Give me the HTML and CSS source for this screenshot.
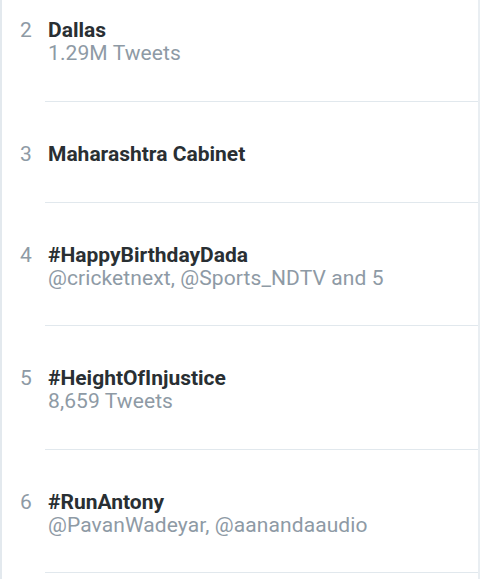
FILE: index.html
```html
<!DOCTYPE html>
<html lang="en">
<head>
<meta charset="utf-8">
<title>Trends</title>
<link rel="stylesheet" href="styles.css">
</head>
<body>
<div class="panel">
  <ol class="trends">
    <li class="trend">
      <span class="rank">2</span>
      <div class="body">
        <div class="name">Dallas</div>
        <div class="meta">1.29M Tweets</div>
      </div>
    </li>
    <li class="trend">
      <span class="rank">3</span>
      <div class="body">
        <div class="name">Maharashtra Cabinet</div>
      </div>
    </li>
    <li class="trend">
      <span class="rank">4</span>
      <div class="body">
        <div class="name">#HappyBirthdayDada</div>
        <div class="meta">@cricketnext, @Sports_NDTV and 5</div>
      </div>
    </li>
    <li class="trend">
      <span class="rank">5</span>
      <div class="body">
        <div class="name">#HeightOfInjustice</div>
        <div class="meta">8,659 Tweets</div>
      </div>
    </li>
    <li class="trend">
      <span class="rank">6</span>
      <div class="body">
        <div class="name">#RunAntony</div>
        <div class="meta">@PavanWadeyar, @aanandaaudio</div>
      </div>
    </li>
  </ol>
</div>
</body>
</html>
```
FILE: styles.css
```css
html, body {
  margin: 0;
  padding: 0;
  background: #ffffff;
}

body {
  font-family: Roboto, "Noto Sans", Arial, sans-serif;
  overflow: hidden;
  height: 579px;
}

.panel {
  height: 579px;
  border-left: 2px solid #e3e9ee;
  border-right: 2px solid #e9eef2;
  box-sizing: border-box;
  overflow: hidden;
}

/* list is scrolled so the first visible trend sits near the top */
.trends {
  list-style: none;
  margin: -22px 0 0 0;
  padding: 0;
}

.trend {
  display: flex;
  align-items: flex-start;
}

.rank {
  width: 25px;
  padding: 40px 0 0 18px;
  font-size: 21px;
  line-height: 24px;
  color: #8e9aa5;
  flex: none;
}

.body {
  flex: 1;
  padding: 40px 0 36px 3px;
  border-bottom: 1px solid #e1e8ed;
}

.name {
  font-size: 21px;
  line-height: 24px;
  font-weight: 700;
  color: #292f33;
}

.meta {
  padding-top: 1px;
  font-size: 21px;
  line-height: 21.5px;
  letter-spacing: 0.1px;
  color: #8e9aa5;
}
```
